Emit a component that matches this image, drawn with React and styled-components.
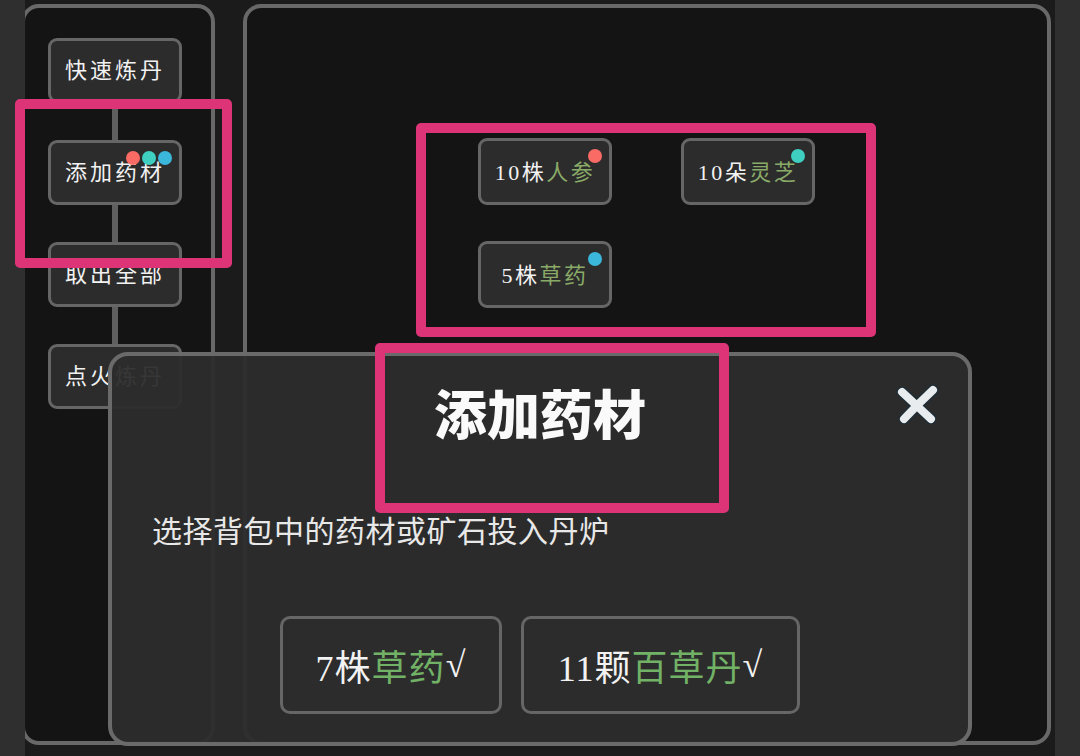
import React from "react";
import styled, { createGlobalStyle } from "styled-components";

const GlobalStyle = createGlobalStyle`
  body {
    margin: 0;
    background: #1b1b1b;
    font-family: "Liberation Serif", "Noto Sans CJK SC", serif;
  }
`;

const leftSteps = [
  { label: "快速炼丹" },
  { label: "添加药材", dots: ["red", "teal", "blue"] },
  { label: "取出全部" },
  { label: "点火炼丹" },
];

const herbs = [
  { count: "10株", name: "人参", dot: "red" },
  { count: "10朵", name: "灵芝", dot: "teal" },
  { count: "5株", name: "草药", dot: "blue" },
];

const picks = [
  { count: "7株", name: "草药", width: 222 },
  { count: "11颗", name: "百草丹", width: 279 },
];

const dotColors = {
  red: "#fb6b66",
  teal: "#3fcfc0",
  blue: "#3bb7dc",
};

const App = () => {
  return (
    <>
      <GlobalStyle />
      <Screen>
        <Strip />
        <Main>
          <StepsPanel>
            {leftSteps.map((step, i) => (
              <React.Fragment key={step.label}>
                {i > 0 && <Rail />}
                <StepButton>
                  {step.label}
                  {step.dots && (
                    <Dots>
                      {step.dots.map((d) => (
                        <Dot key={d} $color={dotColors[d]} />
                      ))}
                    </Dots>
                  )}
                </StepButton>
              </React.Fragment>
            ))}
          </StepsPanel>
          <FurnacePanel>
            <HerbGrid>
              {herbs.map((herb) => (
                <HerbButton key={herb.count + herb.name}>
                  {herb.count}
                  <Green>{herb.name}</Green>
                  <Dots>
                    <Dot $color={dotColors[herb.dot]} />
                  </Dots>
                </HerbButton>
              ))}
            </HerbGrid>
          </FurnacePanel>
        </Main>
        <Strip />

        <Modal>
          <ModalHeader>
            <span />
            <ModalTitle>添加药材</ModalTitle>
            <CloseButton>
              <svg width="46" height="46" viewBox="0 0 46 46">
                <path
                  d="M7 10 Q20 22 36 37 M38 8 Q24 21 9 37"
                  stroke="#1f2d36"
                  strokeWidth="11"
                  strokeLinecap="round"
                  fill="none"
                />
                <path
                  d="M7 10 Q20 22 36 37 M38 8 Q24 21 9 37"
                  stroke="#e8ecef"
                  strokeWidth="8"
                  strokeLinecap="round"
                  fill="none"
                />
              </svg>
            </CloseButton>
          </ModalHeader>
          <ModalText>选择背包中的药材或矿石投入丹炉</ModalText>
          <PickRow>
            {picks.map((pick) => (
              <PickButton key={pick.name} $width={pick.width}>
                {pick.count}
                <PickGreen>{pick.name}</PickGreen>√
              </PickButton>
            ))}
          </PickRow>
        </Modal>

        <Highlight $left={15} $top={99} $width={217} $height={169} />
        <Highlight $left={416} $top={123} $width={460} $height={214} />
        <Highlight $left={375} $top={343} $width={354} $height={170} />
      </Screen>
    </>
  );
};

const Screen = styled.div`
  position: relative;
  width: 1080px;
  height: 756px;
  display: flex;
  overflow: hidden;
  background: #1b1b1b;
`;

const Strip = styled.div`
  position: relative;
  z-index: 2;
  width: 25px;
  flex: none;
  background: #2f2f2f;
`;

const Main = styled.div`
  flex: 1;
  display: flex;
  gap: 28px;
  padding: 4px 4px 11px 0;
`;

const Panel = styled.div`
  box-sizing: border-box;
  border: 4px solid #686868;
  border-radius: 18px;
  background: #141414;
`;

const StepsPanel = styled(Panel)`
  width: 194px;
  margin-left: -4px;
  display: flex;
  flex-direction: column;
  align-items: flex-start;
  padding: 30px 0 0 23px;
`;

const FurnacePanel = styled(Panel)`
  flex: 1;
  padding: 130px 0 0 231px;
`;

const Rail = styled.div`
  width: 6px;
  height: 37px;
  margin-left: 64px;
  background: #5f5f5f;
`;

const BaseButton = styled.div`
  position: relative;
  box-sizing: border-box;
  display: flex;
  align-items: center;
  justify-content: center;
  border: 3px solid #666;
  border-radius: 9px;
  background: #2c2c2c;
  color: #f2f2f2;
  font-family: "Liberation Serif", "Noto Sans CJK SC", serif;
  white-space: nowrap;
`;

const StepButton = styled(BaseButton)`
  width: 134px;
  height: 65px;
  padding-bottom: 5px;
  font-size: 22px;
  letter-spacing: 3px;
`;

const HerbGrid = styled.div`
  display: grid;
  grid-template-columns: 134px 134px;
  grid-auto-rows: 67px;
  column-gap: 69px;
  row-gap: 36px;
`;

const HerbButton = styled(BaseButton)`
  padding-bottom: 4px;
  font-size: 22px;
  letter-spacing: 2.5px;
`;

const Green = styled.span`
  color: #8aaa68;
`;

const Dots = styled.div`
  position: absolute;
  top: 8px;
  right: 7px;
  display: flex;
  gap: 2px;
`;

const Dot = styled.span`
  width: 14px;
  height: 14px;
  border-radius: 50%;
  background: ${(p) => p.$color};
`;

const Modal = styled.div`
  position: absolute;
  z-index: 3;
  left: 108px;
  top: 352px;
  width: 864px;
  height: 394px;
  box-sizing: border-box;
  border: 4px solid #6a6a6a;
  border-radius: 20px;
  background: rgba(44, 44, 44, 0.95);
  padding: 0 40px;
  display: flex;
  flex-direction: column;
`;

const ModalHeader = styled.div`
  display: grid;
  grid-template-columns: 1fr auto 1fr;
  align-items: start;
  padding-top: 30px;
`;

const ModalTitle = styled.div`
  font-family: "Noto Sans CJK SC", sans-serif;
  font-size: 53px;
  font-weight: 900;
  line-height: 1;
  color: #fafafa;
`;

const CloseButton = styled.div`
  justify-self: end;
  margin: -4px -13px 0 0;
  display: flex;
`;

const ModalText = styled.div`
  margin-top: 75px;
  font-family: "Noto Sans CJK SC", sans-serif;
  font-size: 30px;
  letter-spacing: 0.5px;
  line-height: 1;
  color: #e8e8e8;
`;

const PickRow = styled.div`
  margin-top: 72px;
  display: flex;
  justify-content: center;
  gap: 19px;
`;

const PickButton = styled(BaseButton)`
  width: ${(p) => p.$width}px;
  height: 98px;
  font-size: 36px;
  letter-spacing: 1px;
  border-radius: 10px;
`;

const PickGreen = styled.span`
  color: #72b266;
`;

const Highlight = styled.div`
  position: absolute;
  z-index: 4;
  left: ${(p) => p.$left}px;
  top: ${(p) => p.$top}px;
  width: ${(p) => p.$width}px;
  height: ${(p) => p.$height}px;
  box-sizing: border-box;
  border: 10px solid #dc3476;
  border-radius: 5px;
  pointer-events: none;
`;

export default App;
